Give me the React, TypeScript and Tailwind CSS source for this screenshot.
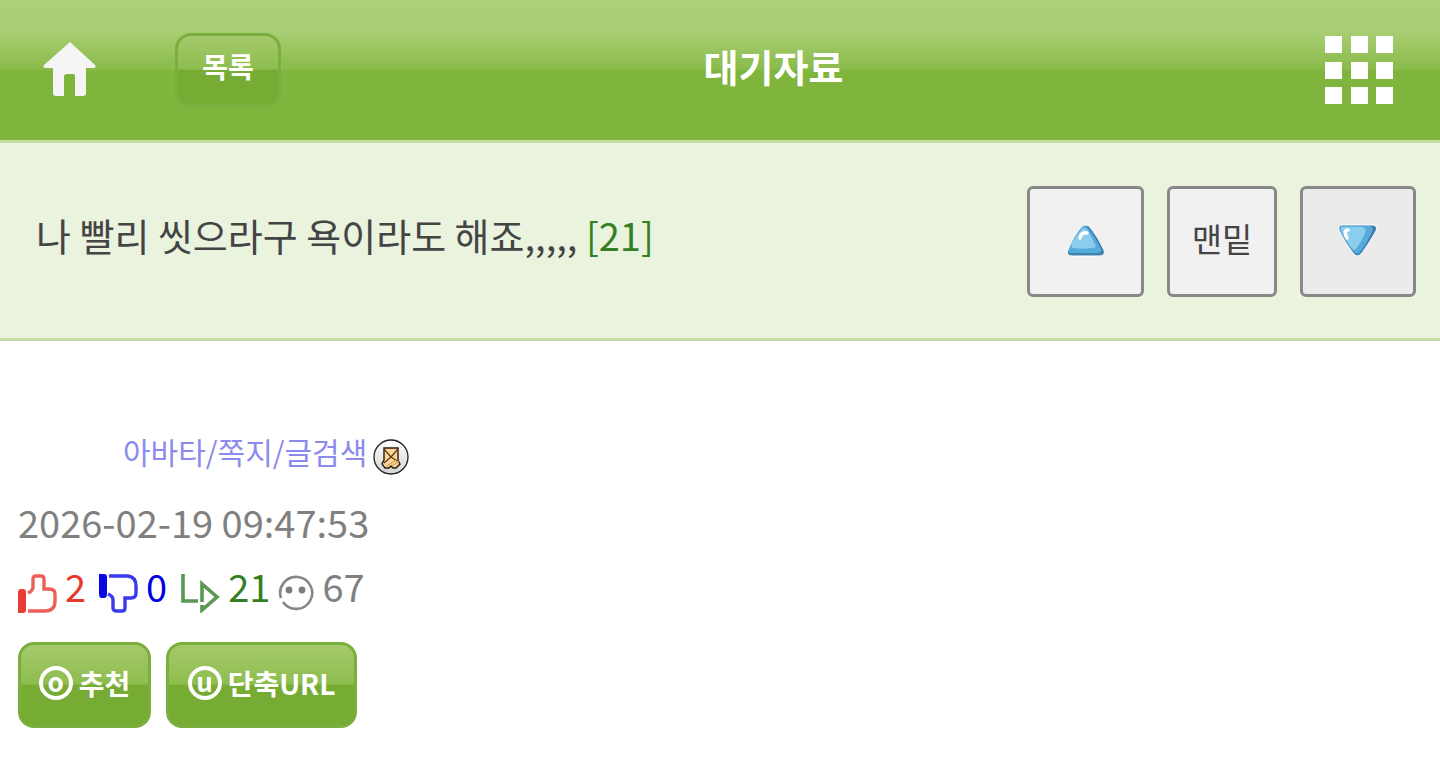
import type { ReactNode } from 'react';

const glossy =
  'bg-[linear-gradient(to_bottom,#a5ca6c_0%,#8dbd4e_49%,#76ab34_50%,#76ab34_100%)] border-[3px] border-[#7aae3d] rounded-2xl text-white font-bold';

function HomeIcon() {
  return (
    <svg width="54" height="56" viewBox="0 0 54 56" fill="#f5f5f5">
      <path d="M27 0 52 23Q54 26 50 26H43V51Q43 54 40 54H32V34Q32 32 30 32H24Q21 32 21 35V54H13Q10 54 10 51V26H3Q-1 26 1 23Z" />
    </svg>
  );
}

function GridIcon() {
  const cells = [1, 27, 52];
  return (
    <svg width="70" height="70" viewBox="0 0 70 70" fill="#fff">
      {cells.map((y) => cells.map((x) => <rect key={`${x}-${y}`} x={x} y={y} width="17" height="17" />))}
    </svg>
  );
}

function UpIcon() {
  return (
    <svg width="40" height="34" viewBox="0 0 40 34">
      <path d="M16 3Q20-1 24 3Q32 13 38 26Q40 32 33 32H6Q0 32 2 26Q8 13 16 3Z" fill="#3f82ad" stroke="#fff" strokeWidth="1" />
      <path d="M16 3Q19 0 22 4Q30 14 35 25Q36 28 31 29H6Q1 29 3 25Q8 12 16 3Z" fill="#57abdc" />
      <path d="M16 5Q19 2 22 7L29 20Q31 24 26 24Q15 25 7 24Q4 23 6 19Q11 11 16 5Z" fill="#8bcdec" />
      <path d="M14 14Q15 8 21 9" fill="none" stroke="#fff" strokeWidth="3.5" strokeLinecap="round" />
    </svg>
  );
}

function DownIcon() {
  return (
    <svg width="40" height="34" viewBox="0 0 40 34">
      <path d="M4 1H35Q40 2 38 7Q32 18 24 29Q19 35 15 29Q7 19 1 6Q0 1 4 1Z" fill="#3f82ad" stroke="#fff" strokeWidth="1" />
      <path d="M4 2H32Q36 3 34 8Q29 19 22 28Q19 32 15 27Q7 18 2 6Q1 2 4 2Z" fill="#57abdc" />
      <path d="M4 3H24Q29 4 27 10Q22 19 18 25Q16 27 13 23Q6 14 3 6Q2 3 4 3Z" fill="#8bcdec" />
      <path d="M10 6Q5 6 9 14" fill="none" stroke="#fff" strokeWidth="3.5" strokeLinecap="round" />
    </svg>
  );
}

function LetterIcon() {
  return (
    <svg width="36" height="36" viewBox="0 0 36 36">
      <defs>
        <linearGradient id="letter-bg" x1="0" y1="0" x2="0" y2="1">
          <stop offset="0" stopColor="#fff" />
          <stop offset="1" stopColor="#d5d5d5" />
        </linearGradient>
      </defs>
      <circle cx="18" cy="18" r="17" fill="url(#letter-bg)" stroke="#222" strokeWidth="1.3" />
      <path d="M11 9H25V21L27 25 23 29H20L18 27 16 29H12L9 25 11 21Z" fill="#fdd397" stroke="#2a1b08" strokeWidth="1.4" />
      <path d="M11 10 18 18 25 10M18 18 11 24M18 18 24 22" fill="none" stroke="#5b3910" strokeWidth="1.2" />
      <path d="M14 27 23 21M19 27 26 22" fill="none" stroke="#c98f45" strokeWidth="1" />
    </svg>
  );
}

function ThumbUpIcon() {
  return (
    <svg width="39" height="39" viewBox="0 0 39 39" fill="none" stroke="#ec6059" strokeWidth="3.4">
      <path d="M2 15H5Q8 15 8 18V36Q8 39 5 39H0V17Z" fill="#e83e35" stroke="none" />
      <path d="M10 19Q15 17 15 13V5Q15 2 18 2H23Q26 2 26 5V15H31Q37 15 37 20V27Q37 37 27 37H10" />
    </svg>
  );
}

function ThumbDownIcon() {
  return (
    <svg width="39" height="39" viewBox="0 0 39 39" fill="none" stroke="#3a3aec" strokeWidth="3.4">
      <path d="M0 0H5Q8 0 8 3V20Q8 24 5 24H2Q0 23 0 20Z" fill="#0808e0" stroke="none" />
      <path d="M10 2H29Q37 3 37 12V19Q37 24 32 24H26V34Q26 37 23 37H18Q14 37 14 34V26Q14 22 9 20" />
    </svg>
  );
}

function ReplyIcon() {
  return (
    <svg width="40" height="39" viewBox="0 0 40 39" fill="none" stroke="#5b9854" strokeWidth="3.6">
      <path d="M3 0V27H18" />
      <path d="M22 28V10L37 23 22 36V31" />
    </svg>
  );
}

function FaceIcon() {
  return (
    <svg width="36" height="38" viewBox="0 0 36 38" fill="none" stroke="#868686" strokeWidth="2.6">
      <path d="M3 23A16 16 0 1 1 5 27" />
      <circle cx="11" cy="15" r="3.4" fill="#7d7d7d" stroke="none" />
      <circle cx="24" cy="15" r="3.4" fill="#7d7d7d" stroke="none" />
    </svg>
  );
}

function Stat({ icon, value, color }: { icon: ReactNode; value: number; color: string }) {
  return (
    <li className="flex items-end gap-2">
      {icon}
      <span className={`h-[46px] leading-[38px] ${color}`}>{value}</span>
    </li>
  );
}

function Badge({ letter }: { letter: string }) {
  return (
    <span className="flex items-center justify-center w-[34px] h-[34px] pb-1 rounded-full border-4 border-white text-[26px] leading-6">
      {letter}
    </span>
  );
}

export default function App() {
  return (
    <div className="min-h-screen bg-white font-['Noto_Sans_CJK_KR',sans-serif]">
      <header className="flex items-center h-[143px] pl-[43px] border-b-[3px] border-[#c6dca3] bg-[linear-gradient(to_bottom,#abd078_0%,#a9ce74_22%,#8abb4b_49%,#7fb53c_51%,#7fb53c_100%)]">
        <a href="#home" aria-label="홈">
          <HomeIcon />
        </a>
        <button type="button" className={`${glossy} ml-[78px] w-[106px] h-[74px] pb-2 text-[28px] leading-8`}>
          목록
        </button>
        <h1 className="flex-1 pb-2 text-center text-[38px] leading-[46px] font-bold text-white">대기자료</h1>
        <button type="button" aria-label="메뉴" className="pl-[58px] pr-[46px]">
          <GridIcon />
        </button>
      </header>

      <section className="flex items-center justify-between h-[198px] pt-px pl-9 pr-6 border-b-[3px] border-[#c6dca3] bg-[#e9f3de]">
        <h2 className="pb-3 text-[38px] leading-[46px] text-[#444]">
          나 빨리 씻으라구 욕이라도 해죠,,,,, <span className="text-[#347f22]">[21]</span>
        </h2>
        <nav className="flex shrink-0 gap-[23px]">
          <button type="button" aria-label="위로" className="flex items-center justify-center w-[117px] h-[111px] rounded-md border-[3px] border-[#888] bg-[#f1f1f1]">
            <UpIcon />
          </button>
          <button type="button" className="w-[110px] h-[111px] pb-1 rounded-md border-[3px] border-[#888] bg-[#f1f1f1] text-[33px] text-[#444]">
            맨밑
          </button>
          <button type="button" aria-label="아래로" className="flex items-center justify-center w-[116px] h-[111px] rounded-md border-[3px] border-[#888] bg-[#ebebeb]">
            <DownIcon />
          </button>
        </nav>
      </section>

      <main className="px-[18px] pt-[92px]">
        <div className="flex items-center gap-1.5 pl-[105px]">
          <a href="#author" className="pb-2 text-[30px] leading-9 text-[#8b8bed]">
            아바타/쪽지/글검색
          </a>
          <button type="button" aria-label="쪽지 보내기" className="pt-1">
            <LetterIcon />
          </button>
        </div>

        <p className="mt-[22px] text-[38px] leading-[46px] text-[#808080]">2026-02-19 09:47:53</p>

        <div className="flex items-end gap-2 mt-[22px] text-[38px]">
          <ul className="flex items-end gap-[13px]">
            <Stat icon={<ThumbUpIcon />} value={2} color="text-[#e8362d]" />
            <Stat icon={<ThumbDownIcon />} value={0} color="text-[#0000e0]" />
            <Stat icon={<ReplyIcon />} value={21} color="text-[#347f22]" />
          </ul>
          <ul>
            <Stat icon={<FaceIcon />} value={67} color="text-[#808080]" />
          </ul>
        </div>

        <div className="flex gap-[15px] mt-[29px]">
          <button type="button" className={`${glossy} flex items-center justify-center gap-1.5 w-[133px] h-[86px] pb-1 text-[28px]`}>
            <Badge letter="o" />
            추천
          </button>
          <button type="button" className={`${glossy} flex items-center justify-center gap-1.5 w-[191px] h-[86px] pb-1 text-[28px]`}>
            <Badge letter="u" />
            단축URL
          </button>
        </div>
      </main>
    </div>
  );
}
